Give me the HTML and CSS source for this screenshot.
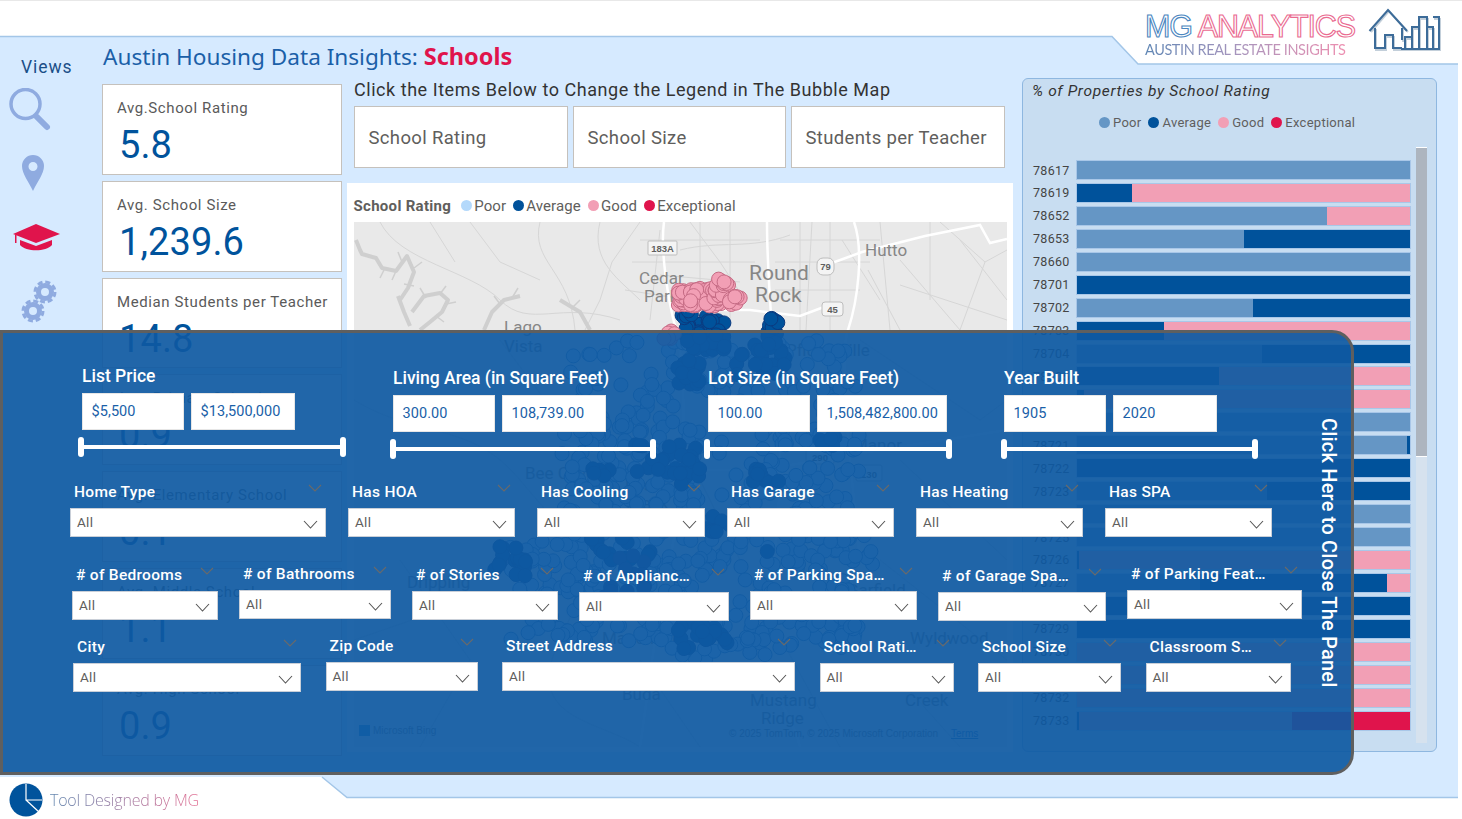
FILE: index.html
```html
<!DOCTYPE html>
<html lang="en">
<head>
<meta charset="utf-8">
<title>Austin Housing Data Insights: Schools</title>
<link rel="stylesheet" href="styles.css">
</head>
<body>
<div class="page">
  <svg class="decor" viewBox="0 0 1462 819" aria-hidden="true">
    <rect class="d-strip" x="1458" y="0" width="4" height="819"/>
    <polygon class="d-white" points="0,1 1458,1 1458,64 1138,64 1112,36.5 0,36.5"/>
    <polyline class="d-edge" points="0,36.5 1112,36.5 1138,64 1458,64"/>
    <polygon class="d-white" points="0,777 322,777 347,797.5 1458,797.5 1458,819 0,819"/>
    <polyline class="d-edge" points="322,777 347,797.5 1458,797.5"/>
  </svg>

  <header class="topbar">
    <div class="brand">
      <div class="brand-text">
        <div class="brand-name"><span class="brand-mg">MG</span> <span class="brand-an">ANALYTICS</span></div>
        <div class="brand-sub">AUSTIN REAL ESTATE INSIGHTS</div>
      </div>
      <svg class="brand-icon" viewBox="0 0 74 44" aria-hidden="true">
        <g class="bi-shadow">
          <path d="M3 25 L21 4 L40 25 M8 22 V43 H18 V30 H26 V43 H35 M35 35 V22"/>
          <path d="M38 44 V32 H45 V44 M45 44 V22 H52 V44 M52 44 V12 H60 V44 M60 44 V22 H66 V44 M66 12 H72 V44 H34"/>
        </g>
        <g class="bi-main">
          <path d="M1.5 24 L20 3 L39 24 M7 21 V41 H17 V28 H25 V41 H34 M34 33 V21"/>
          <path d="M37 42 V30 H44 V42 M44 42 V20 H51 V42 M51 42 V10 H59 V42 M59 42 V20 H65 V42 M65 10 H71 V42 H33"/>
        </g>
      </svg>
    </div>
  </header>

  <div class="main">
    <nav class="nav">
      <div class="nav-title">Views</div>
      <svg class="nav-icon i-search" viewBox="0 0 44 44" aria-hidden="true">
        <circle class="ic-stroke" cx="16.5" cy="16" r="14.5"/>
        <line class="ic-handle" x1="28" y1="29" x2="38" y2="39"/>
      </svg>
      <svg class="nav-icon i-pin" viewBox="0 0 24 36" aria-hidden="true">
        <path class="ic-fill" fill-rule="evenodd" d="M12 0a11 11 0 0 1 11 11c0 8-7 16-11 25C8 27 1 19 1 11A11 11 0 0 1 12 0zm0 7a4.5 4.5 0 1 0 0 9 4.5 4.5 0 0 0 0-9z"/>
      </svg>
      <svg class="nav-icon i-cap" viewBox="0 0 48 27" aria-hidden="true">
        <path class="ic-red" d="M24 0 48 10 24 19 1 10z"/>
        <path class="ic-red" d="M8 16 24 22 40 16V21C34 28 14 28 8 21z"/>
        <path class="ic-red" d="M3 11h1.5V19H3z"/>
      </svg>
      <svg class="nav-icon i-gears" viewBox="0 0 36 44" aria-hidden="true">
        <g>
          <circle class="gear-ring" cx="24" cy="12" r="6.5"/>
          <circle class="gear-teeth" cx="24" cy="12" r="10"/>
          <circle class="gear-ring" cx="12" cy="31" r="6.5"/>
          <circle class="gear-teeth" cx="12" cy="31" r="10"/>
        </g>
      </svg>
    </nav>

    <div class="center">
      <h1 class="title">Austin Housing Data Insights: <b>Schools</b></h1>
      <div class="center-body">
        <div class="cards">
          <div class="card"><div class="card-label">Avg.School Rating</div><div class="card-value">5.8</div></div>
          <div class="card"><div class="card-label">Avg. School Size</div><div class="card-value">1,239.6</div></div>
          <div class="card"><div class="card-label">Median Students per Teacher</div><div class="card-value">14.8</div></div>
          <div class="card"><div class="card-label">Avg. Primary School</div><div class="card-value">0.9</div></div>
          <div class="card"><div class="card-label">Avg. Elementary School</div><div class="card-value">0.1</div></div>
          <div class="card"><div class="card-label">Avg. Middle School</div><div class="card-value">1.1</div></div>
          <div class="card"><div class="card-label">Avg. High School</div><div class="card-value">0.9</div></div>
        </div>
        <div class="mid">
          <div class="mid-heading">Click the Items Below to Change the Legend in The Bubble Map</div>
          <div class="tabs">
            <div class="tab t214">School Rating</div>
            <div class="tab t213">School Size</div>
            <div class="tab t214">Students per Teacher</div>
          </div>
          <section class="mapbox">
            <div class="map-legend">
              <strong>School Rating</strong>
              <span class="lg"><i class="dot d-poor"></i>Poor</span>
              <span class="lg"><i class="dot d-avg"></i>Average</span>
              <span class="lg"><i class="dot d-good"></i>Good</span>
              <span class="lg"><i class="dot d-exc"></i>Exceptional</span>
            </div>
            <svg class="map" id="map" viewBox="354 222 653 525" aria-label="Bubble map of Austin">
              <rect class="m-land" x="354" y="222" width="653" height="525"/>
              <g class="m-thin">
                <path d="M380 222C400 262 470 270 500 300S560 300 620 320M600 222C590 262 620 280 640 300M640 240H760M632 262H755M625 290 690 300M700 222V320M730 222V320M660 230 650 320M780 240H880M775 262H870M775 290H860M800 222V330M830 222V330M880 222 890 330M900 260 960 330M930 222V300M960 240 1007 300"/>
                <path d="M640 222 612 262 600 300 585 330M540 222C530 262 570 270 575 330M680 250C720 240 750 250 790 235M660 275 740 282M690 222 720 262 745 300M812 222 806 330M842 240 880 300M868 270 900 330M940 222 985 262 1007 250M985 262 960 330M900 285 1007 320M470 222 500 262 540 280M430 222 455 262"/>
                <path d="M354 400C420 440 470 420 520 480S600 560 560 640 600 720 640 747M500 340 560 420M700 480 760 600 840 747M860 340 980 420 1007 400M900 460 1007 560M880 560 1007 660M400 560 470 660 420 747M354 640 470 600M640 660 700 747M900 680 960 747"/>
              </g>
              <g class="m-lake">
                <path d="M356 240 360 250 362 254 376 258 382 268 396 271 407 256 414 272 408 288 400 300"/>
                <path d="M398 296 404 312 410 326M412 312 424 296 440 293 448 300 442 312 430 322 420 330"/>
                <path d="M484 330 492 312 504 300 520 296M560 300 580 312 590 330"/>
              </g>
              <g class="m-lake-b">
                <path d="M402 262 398 252M414 268 422 262M384 270 380 278M404 284 414 286M396 271 392 280M426 298 420 288M440 294 446 286M446 304 456 302M436 316 444 322M500 304 494 296M512 298 518 288M572 308 580 300"/>
              </g>
              <g class="m-road">
                <path d="M664 222C660 250 668 300 676 330S690 460 670 560 650 680 640 747"/>
                <path d="M767 222C767 260 770 300 772 330S790 470 770 580 790 700 800 747"/>
                <path d="M854 222C864 250 858 300 848 330S850 460 860 560"/>
                <path d="M832 263 862 252 925 236 980 225 990 243 1007 239"/>
                <path d="M676 310H750L800 316 832 304"/>
                <path d="M560 440 640 470 760 470 880 450 1007 430"/>
              </g>
              <g class="m-shield">
                <rect x="648" y="241" width="29" height="14" rx="1"/>
                <rect x="817" y="258" width="17" height="17" rx="6"/>
                <rect x="822" y="302" width="21" height="14" rx="3"/>
                <rect x="806" y="448" width="28" height="16" rx="2"/>
                <rect x="856" y="465" width="26" height="16" rx="2"/>
                <rect x="354" y="594" width="22" height="16" rx="2"/>
              </g>
              <g class="m-stext">
                <text x="662.5" y="252">183A</text>
                <text x="825.5" y="270">79</text>
                <text x="832.5" y="313">45</text>
                <text x="820" y="461">290</text>
                <text x="869" y="478">130</text>
                <text x="365" y="607">290</text>
              </g>
              <g class="m-label">
                <text x="865" y="256">Hutto</text>
                <text x="639" y="284">Cedar</text>
                <text x="644" y="302">Park</text>
                <text x="504" y="333">Lago</text>
                <text x="504" y="352">Vista</text>
                <text x="786" y="356">Pflugerville</text>
                <text x="853" y="451">Manor</text>
                <text x="525" y="479">Bee Cave</text>
                <text x="625" y="491">Lost</text>
                <text x="625" y="509">Creek</text>
                <text x="407" y="588">Dripping</text>
                <text x="847" y="596">Garfield</text>
                <text x="910" y="644">Wyldwood</text>
                <text x="602" y="644">Manchaca</text>
                <text x="622" y="700">Buda</text>
                <text x="750" y="706">Mustang</text>
                <text x="761" y="724">Ridge</text>
                <text x="905" y="706">Creek</text>
              </g>
              <g class="m-big">
                <text x="749" y="280">Round</text>
                <text x="755" y="302">Rock</text>
              </g>
              <g id="bubbles"></g>
              <rect class="m-ms1" x="359" y="725" width="11" height="11"/>
              <text class="m-foot" x="373" y="734">Microsoft Bing</text>
              <text class="m-foot" x="729" y="737">© 2025 TomTom, © 2025 Microsoft Corporation</text>
              <text class="m-terms" x="951" y="737">Terms</text>
            </svg>
          </section>
        </div>
      </div>
    </div>

    <aside class="chart">
      <div class="chart-title">% of Properties by School Rating</div>
      <div class="chart-legend">
        <span class="lg"><i class="dot d-poor2"></i>Poor</span>
        <span class="lg"><i class="dot d-avg"></i>Average</span>
        <span class="lg"><i class="dot d-good"></i>Good</span>
        <span class="lg"><i class="dot d-exc"></i>Exceptional</span>
      </div>
      <div class="bars" id="bars"></div>
      <div class="scroll"><div class="scroll-thumb"></div></div>
    </aside>
  </div>

  <footer class="footer">
    <svg class="foot-icon" viewBox="0 0 34 34" aria-hidden="true">
      <circle class="fi-disc" cx="17" cy="17" r="16.5"/>
      <path class="fi-line" d="M17 1V17H33M17 17 30 29"/>
    </svg>
    <span class="foot-text">Tool Designed by MG</span>
  </footer>

  <div class="panel">
    <div class="ranges">
      <div class="range r1">
        <div class="range-label">List Price</div>
        <div class="range-inputs"><div class="inp w102">$5,500</div><div class="inp w104">$13,500,000</div></div>
        <div class="slider"><i class="handle"></i><i class="track"></i><i class="handle"></i></div>
      </div>
      <div class="range r2 n2">
        <div class="range-label">Living Area (in Square Feet)</div>
        <div class="range-inputs"><div class="inp w102">300.00</div><div class="inp w104">108,739.00</div></div>
        <div class="slider"><i class="handle"></i><i class="track"></i><i class="handle"></i></div>
      </div>
      <div class="range r3 n2">
        <div class="range-label">Lot Size (in Square Feet)</div>
        <div class="range-inputs"><div class="inp w102">100.00</div><div class="inp w130">1,508,482,800.00</div></div>
        <div class="slider"><i class="handle"></i><i class="track"></i><i class="handle"></i></div>
      </div>
      <div class="range r4 n2">
        <div class="range-label">Year Built</div>
        <div class="range-inputs"><div class="inp w102">1905</div><div class="inp w104">2020</div></div>
        <div class="slider"><i class="handle"></i><i class="track"></i><i class="handle"></i></div>
      </div>
    </div>

    <div class="srow row1" id="row1"></div>
    <div class="srow row2" id="row2"></div>
    <div class="srow row3" id="row3"></div>

    <button class="close-panel">Click Here to Close The Panel</button>
  </div>
</div>
<script src="app.js"></script>
</body>
</html>
```

FILE: styles.css
```css
* { box-sizing: border-box; }
html, body { margin: 0; padding: 0; }
body { font-family: Roboto, "Liberation Sans", sans-serif; background: #fff; }
.page { position: relative; width: 1462px; height: 819px; overflow: hidden; background: #d6eaff; display: flex; flex-direction: column; }

.decor { position: absolute; inset: 0; width: 1462px; height: 819px; }
.d-strip, .d-white { fill: #fff; }
.d-edge { fill: none; stroke: #a3c6e8; stroke-width: 1.5; }

.topbar { position: relative; height: 36px; flex: none; display: flex; justify-content: flex-end; border-top: 1px solid #e8e8e8; }
.brand { display: flex; height: 60px; margin-right: 20px; }
.brand-text { width: 223px; padding-top: 8px; }
.brand-name { font-family: "Liberation Sans", sans-serif; font-size: 30.5px; line-height: 34px; letter-spacing: -1.1px; white-space: nowrap; color: transparent; }
.brand-mg { -webkit-text-stroke: 1.1px #4c87bf; }
.brand-an { -webkit-text-stroke: 1.1px #ea6a90; }
.brand-sub { font-family: Lato, sans-serif; font-size: 14.5px; line-height: 14px; letter-spacing: -0.42px; white-space: nowrap; width: 204px; background: linear-gradient(90deg, #5f86b4, #a795bd 45%, #ef8fb0); -webkit-background-clip: text; background-clip: text; color: transparent; }
.brand-icon { width: 74px; height: 44px; margin-top: 6px; }
.bi-main path, .bi-shadow path { fill: none; }
.bi-main path { stroke: #3d6c99; stroke-width: 2; }
.bi-shadow path { stroke: #c3cfda; stroke-width: 2; }

.main { position: relative; flex: 1; display: flex; min-height: 0; }

.nav { width: 102px; flex: none; display: flex; flex-direction: column; padding-top: 21px; }
.nav-title { width: 74px; padding-left: 21px; font-size: 17.5px; line-height: 20px; letter-spacing: 0.9px; color: #1b4f88; }
.nav-icon { display: block; }
.i-search { width: 44px; height: 44px; margin: 11px 0 0 9px; }
.i-pin { width: 24px; height: 36px; margin: 23px 0 0 21px; }
.i-cap { width: 48px; height: 27px; margin: 33px 0 0 12px; }
.i-gears { width: 36px; height: 44px; margin: 29px 0 0 21px; }
.ic-stroke { fill: none; stroke: #8fabe0; stroke-width: 3.5; }
.ic-handle { stroke: #8fabe0; stroke-width: 6; stroke-linecap: round; }
.ic-fill { fill: #8fabe0; }
.ic-red { fill: #e0144c; }
.gear-ring { fill: none; stroke: #8fabe0; stroke-width: 5; }
.gear-teeth { fill: none; stroke: #8fabe0; stroke-width: 3; stroke-dasharray: 5 2.85; }

.center { width: 911px; flex: none; }
.title { margin: 0; height: 48px; font-family: "Noto Sans", "Open Sans", sans-serif; font-size: 22.6px; line-height: 40px; font-weight: 400; color: #1b5fa8; white-space: nowrap; padding-left: 1px; }
.title b { color: #e0144c; font-weight: 700; font-size: 23.5px; }
.center-body { display: flex; }

.cards { width: 240px; flex: none; display: flex; flex-direction: column; gap: 6px; }
.card { height: 90.8px; background: #fff; border: 1.5px solid #c5c1bc; padding: 13px 0 0 14px; }
.card-label { font-size: 15px; line-height: 20px; letter-spacing: 0.6px; color: #5a5a5a; white-space: nowrap; }
.card-value { font-size: 38px; line-height: 44px; margin: 5px 0 0 2px; color: #00539c; letter-spacing: 0.1px; }

.mid { width: 666px; margin-left: 5px; flex: none; }
.mid-heading { height: 22px; margin-top: -6px; padding-left: 7px; font-size: 18px; line-height: 24px; letter-spacing: 0.54px; color: #333; white-space: nowrap; }
.tabs { display: flex; gap: 5px; margin: 6px 0 0 7px; height: 62px; }
.tab { background: #fff; border: 1.5px solid #c5c1bc; font-size: 18.5px; letter-spacing: 0.34px; color: #605e5c; display: flex; align-items: center; padding: 2px 0 0 13.5px; white-space: nowrap; }
.t214 { width: 214px; }
.t213 { width: 213px; }

.mapbox { background: #fff; margin-top: 15px; height: 569px; padding: 0 6.5px; }
.map-legend { height: 39px; display: flex; align-items: center; padding-top: 6px; gap: 7px; font-size: 15px; letter-spacing: 0.12px; color: #605e5c; white-space: nowrap; }
.map-legend strong { font-weight: 700; margin-right: 3px; letter-spacing: 0.3px; }
.lg { display: inline-flex; align-items: center; gap: 2px; }
.dot { display: inline-block; width: 11px; height: 11px; border-radius: 50%; }
.d-poor { background: #b4d9fb; }
.d-poor2 { background: #6596c5; }
.d-avg { background: #00529b; }
.d-good { background: #f29fb5; }
.d-exc { background: #e0144c; }
.map { display: block; width: 653px; height: 525px; }
.m-land { fill: #e9e9e9; }
.m-lake path { fill: none; stroke: #cfcfcf; stroke-width: 4; stroke-linejoin: round; }
.m-lake-b path { fill: none; stroke: #cfcfcf; stroke-width: 1.5; }
.m-thin path { fill: none; stroke: #d6d6d6; stroke-width: 1; }
.m-road path { fill: none; stroke: #fff; stroke-width: 2.5; }
.m-shield rect { fill: #f4f4f4; stroke: #bdbdbd; stroke-width: 1; }
.m-stext text { font-size: 9.5px; font-weight: 700; fill: #5f5f5f; text-anchor: middle; font-family: "Liberation Sans", sans-serif; }
.m-label text { font-size: 17px; fill: #868686; }
.m-big text { font-size: 21px; fill: #868686; }
.bub-poor { fill: #b4d9fb; stroke: #3f7fbe; stroke-width: 1; }
.bub-avg { fill: #00529b; stroke: #0b3a7f; stroke-width: 1; }
.bub-good { fill: #f29fb5; stroke: #c56b84; stroke-width: 1; }
.bub-pur { fill: #36458f; stroke: #2a3a80; stroke-width: 1; }
.m-ms1 { fill: #2f8fc8; }
.m-foot { font-size: 10px; fill: #777; font-family: "Liberation Sans", sans-serif; }
.m-terms { font-size: 10px; fill: #1a6fc0; text-decoration: underline; font-family: "Liberation Sans", sans-serif; }

.chart { position: relative; width: 415px; height: 674px; margin: 42px 0 0 9px; flex: none; background: #c8ddf1; border: 1.5px solid #8eb7e0; border-radius: 6px; }
.chart-title { padding: 2px 0 0 9px; font-size: 15.5px; line-height: 20px; font-style: italic; letter-spacing: 0.66px; color: #333; white-space: nowrap; }
.chart-legend { display: flex; justify-content: flex-start; gap: 7px; margin-top: 11px; padding-left: 76px; height: 20px; align-items: center; font-size: 13px; letter-spacing: 0.28px; color: #5f5f5f; white-space: nowrap; }
.chart-legend .dot { margin-right: 1px; }
.bars { margin-top: 29px; display: flex; flex-direction: column; gap: 4.95px; }
.bar-row { display: flex; height: 18px; align-items: center; }
.bar-label { width: 44px; padding-left: 10px; margin-right: 10px; font-size: 12.5px; letter-spacing: 0.3px; color: #444; flex: none; }
.bar { width: 333px; height: 18px; display: flex; box-shadow: 0 0 0 1px rgba(155,190,228,.7); }
.seg { display: block; height: 100%; }
.s-poor { background: #6596c5; }
.s-avg { background: #00529b; }
.s-good { background: #f29fb5; }
.s-exc { background: #e0144c; }
.scroll { position: absolute; left: 393px; top: 68px; width: 11px; height: 596px; background: #d6e2ee; }
.scroll-thumb { height: 310px; background: #adb5bf; border-top: 1px solid #fff; border-bottom: 1px solid #fff; }

.footer { position: relative; height: 38px; flex: none; display: flex; align-items: center; padding-left: 9px; gap: 7px; }
.foot-icon { width: 34px; height: 34px; }
.fi-disc { fill: #00539c; }
.fi-line { fill: none; stroke: #fff; stroke-width: 1.2; }
.foot-text { font-family: "Open Sans", sans-serif; font-size: 16px; font-weight: 300; letter-spacing: -0.2px; background: linear-gradient(90deg, #5f84ad, #e26f93); -webkit-background-clip: text; background-clip: text; color: transparent; }

.panel { position: absolute; left: 0; top: 330px; width: 1354px; height: 445px; background: rgba(14, 89, 162, .92); border: 3px solid #5f5f5f; border-radius: 0 22px 22px 0; padding-top: 33px; color: #fff; }
.ranges { display: flex; align-items: flex-start; padding-left: 75px; height: 93px; }
.range { flex: none; }
.r1 { width: 268px; }
.r2 { width: 266px; margin-left: 44px; }
.r3 { width: 248px; margin-left: 48px; }
.r4 { width: 257px; margin-left: 49px; }
.n2 { margin-top: 2px; }
.range-label { height: 20px; margin-left: 4px; font-size: 17.5px; line-height: 20px; font-weight: 500; white-space: nowrap; }
.range-inputs { display: flex; gap: 7px; margin: 7px 0 0 4px; }
.r2 .range-label, .r4 .range-label, .r2 .range-inputs, .r4 .range-inputs { margin-left: 3px; }
.inp { height: 37px; background: #fff; border: 1.5px solid #e6e6e6; color: #1a5fa8; font-size: 14.5px; letter-spacing: 0.08px; display: flex; align-items: center; padding-left: 8.5px; white-space: nowrap; }
.w102 { width: 102px; }
.w104 { width: 104px; }
.w130 { width: 130px; }
.slider { display: flex; align-items: center; height: 20px; margin-top: 7px; }
.handle { display: block; width: 6px; height: 20px; background: #fff; border-radius: 3px; flex: none; }
.track { display: block; flex: 1; height: 4px; background: #fff; }

.srow { display: flex; align-items: flex-start; }
.row1 { margin-top: 19px; padding-left: 67px; gap: 22px; }
.row2 { margin-top: 23px; padding-left: 69px; gap: 21px; height: 60px; }
.row3 { margin-top: 12px; padding-left: 70px; gap: 24.5px; }
.slicer { flex: none; }
.s-head { height: 30px; display: flex; justify-content: space-between; padding: 4px 4px 0 4px; }
.s-name { font-size: 15.5px; line-height: 20px; font-weight: 500; letter-spacing: 0.3px; white-space: nowrap; }
.s-clear { width: 14px; height: 8px; margin-top: 2px; flex: none; }
.s-clear path, .dd-chev path { fill: none; stroke-width: 1.1; }
.s-clear path { stroke: #6a6a6a; }
.dd-chev path { stroke: #555; }
.dd { height: 29px; background: #fff; border: 1.5px solid #c9cfd8; display: flex; align-items: center; justify-content: space-between; padding: 0 7px 2px 6px; color: #605e5c; font-size: 13.5px; letter-spacing: 0.3px; }
.dd-chev { width: 15px; height: 9px; margin-top: 5px; }

.close-panel { position: absolute; left: 1313px; top: 85px; height: 272px; width: 26px; padding: 0; background: none; border: 0; color: #fff; font-family: Roboto, sans-serif; font-size: 20px; font-weight: 500; letter-spacing: 0.2px; writing-mode: vertical-rl; white-space: nowrap; text-align: left; }
```

FILE: app.js
```js
(function () {
  var NS = 'http://www.w3.org/2000/svg';
  var seed = 12345;
  function rnd() { seed = (seed * 16807) % 2147483647; return seed / 2147483647; }

  // x0, y0, x1, y1, count, kind
  var blobs = [
    [570, 340, 860, 650, 420, 'poor'], [545, 420, 700, 640, 90, 'poor'], [760, 400, 860, 640, 90, 'poor'],
    [505, 540, 600, 640, 50, 'poor'], [680, 600, 780, 660, 40, 'poor'], [830, 530, 880, 610, 12, 'poor'],
    [675, 360, 700, 385, 16, 'avg'], [735, 345, 785, 375, 22, 'avg'], [635, 440, 700, 475, 24, 'avg'],
    [680, 455, 700, 485, 9, 'avg'], [750, 467, 780, 483, 9, 'avg'], [820, 433, 840, 447, 7, 'avg'],
    [590, 467, 617, 477, 5, 'avg'], [490, 545, 527, 580, 18, 'avg'], [590, 537, 652, 560, 14, 'avg'],
    [678, 620, 730, 653, 22, 'avg'], [767, 551, 768, 552, 1, 'avg'], [690, 516, 730, 535, 10, 'avg'],
    [600, 555, 650, 597, 12, 'pur'],
    [684, 315, 725, 350, 44, 'avg'], [767, 318, 779, 345, 18, 'avg'], [682, 310, 692, 320, 5, 'avg'],
    [662, 328, 675, 340, 7, 'good'], [678, 290, 694, 306, 30, 'good'], [690, 288, 722, 306, 60, 'good'],
    [712, 284, 730, 300, 26, 'good'], [718, 278, 727, 286, 6, 'good'], [726, 296, 741, 305, 8, 'good']
  ];
  var g = document.getElementById('bubbles');
  blobs.forEach(function (b) {
    for (var i = 0; i < b[4]; i++) {
      var c = document.createElementNS(NS, 'circle');
      c.setAttribute('cx', (b[0] + rnd() * (b[2] - b[0])).toFixed(1));
      c.setAttribute('cy', (b[1] + rnd() * (b[3] - b[1])).toFixed(1));
      c.setAttribute('r', '7');
      c.setAttribute('class', 'bub-' + b[5]);
      g.appendChild(c);
    }
  });

  // zip, then [kind, percent] segments
  var P = 'poor', A = 'avg', G = 'good', E = 'exc';
  var rows = [
    ['78617', [[P, 100]]], ['78619', [[A, 16.5], [G, 83.5]]], ['78652', [[P, 75], [G, 25]]],
    ['78653', [[P, 50], [A, 50]]], ['78660', [[P, 100]]], ['78701', [[A, 100]]],
    ['78702', [[P, 53], [A, 47]]], ['78703', [[A, 26], [G, 74]]], ['78704', [[P, 55.5], [A, 44.5]]],
    ['78705', [[A, 42.7], [G, 57.3]]], ['78717', [[A, 2], [G, 98]]], ['78719', [[P, 100]]],
    ['78721', [[P, 99], [A, 1]]], ['78722', [[A, 100]]], ['78723', [[P, 57], [A, 43]]],
    ['78724', [[P, 100]]], ['78725', [[P, 100]]], ['78726', [[A, 0.5], [G, 99.5]]],
    ['78727', [[P, 37], [A, 56], [G, 7]]], ['78728', [[A, 100]]], ['78729', [[A, 100]]],
    ['78730', [[G, 100]]], ['78731', [[G, 100]]], ['78732', [[G, 100]]],
    ['78733', [[A, 0.5], [G, 64], [E, 35.5]]]
  ];
  var bars = document.getElementById('bars');
  rows.forEach(function (r) {
    var html = '<div class="bar-row"><span class="bar-label">' + r[0] + '</span><div class="bar">';
    r[1].forEach(function (s) {
      html += '<i class="seg s-' + s[0] + '" style="width:' + s[1] + '%"></i>';
    });
    bars.insertAdjacentHTML('beforeend', html + '</div></div>');
  });

  // name, width, nudge
  var slicers = {
    row1: [['Home Type', 256], ['Has HOA', 167], ['Has Cooling', 168], ['Has Garage', 167], ['Has Heating', 167], ['Has SPA', 167]],
    row2: [['# of Bedrooms', 146, 1], ['# of Bathrooms', 152], ['# of Stories', 146, 1], ['# of Applianc…', 150, 2], ['# of Parking Spa…', 167, 1], ['# of Garage Spa…', 168, 2], ['# of Parking Feat…', 175]],
    row3: [['City', 228, 1], ['Zip Code', 152], ['Street Address', 293], ['School Rati…', 134, 1], ['School Size', 143, 1], ['Classroom S…', 145, 1]]
  };
  var clear = '<svg class="s-clear" viewBox="0 0 14 8"><path d="M1 1 7 7 13 1"/></svg>';
  var chev = '<svg class="dd-chev" viewBox="0 0 15 9"><path d="M1 1 7.5 8 14 1"/></svg>';
  Object.keys(slicers).forEach(function (id) {
    var row = document.getElementById(id);
    slicers[id].forEach(function (s) {
      row.insertAdjacentHTML('beforeend',
        '<div class="slicer" style="width:' + s[1] + 'px;margin-top:' + (s[2] || 0) + 'px">' +
        '<div class="s-head"><span class="s-name">' + s[0] + '</span>' + clear + '</div>' +
        '<div class="dd"><span>All</span>' + chev + '</div></div>');
    });
  });
})();
```
